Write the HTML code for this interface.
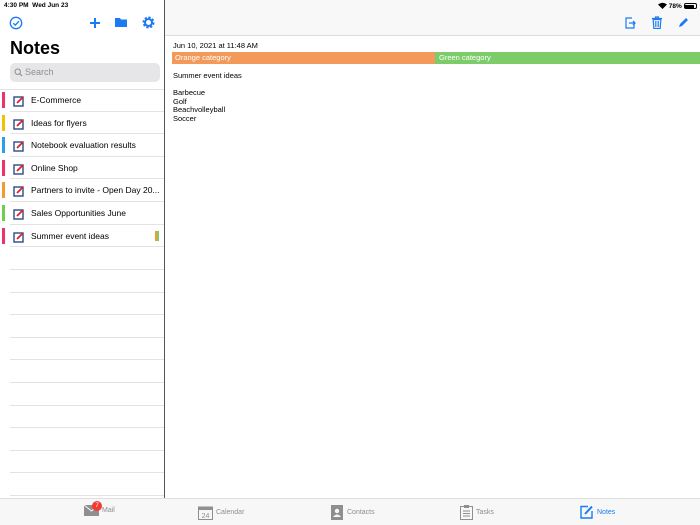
<!DOCTYPE html><html><head><style>
*{margin:0;padding:0;box-sizing:border-box}
body{width:700px;height:525px;position:relative;font-family:"Liberation Sans",sans-serif;background:#fff;overflow:hidden;color:#000}
.abs{position:absolute}
.row{position:absolute;left:0;width:164px;height:22.6px;font-size:8.5px;line-height:22px}
.row .bar{position:absolute;left:2px;top:3px;width:2.5px;height:16px}
.row .t{position:absolute;left:31px;top:0}
.row .ln{position:absolute;left:10px;right:0;bottom:0;border-bottom:1px solid #e3e3e3}
.ic{position:absolute;left:13px;top:6px}
.line{position:absolute;left:10px;width:154px;border-bottom:1px solid #e3e3e3}
.tab{position:absolute;top:505px;font-size:7px;color:#8e8e93;display:flex;align-items:center;gap:3px}
</style></head><body>
<div class="abs" style="left:164px;top:0;width:1px;height:498px;background:#555"></div>
<div class="abs" style="left:165px;top:0;width:535px;height:36px;background:#f8f8f8;border-bottom:1px solid #ddd"></div>
<div class="abs" style="left:4px;top:2px;font-size:6.5px;font-weight:bold">4:30 PM&nbsp; Wed Jun 23</div>
<div class="abs" style="left:658px;top:2px;font-size:6.5px;font-weight:bold">
<svg width="9" height="7" viewBox="0 0 9 7" style="vertical-align:-1px"><path d="M4.5 7L0 2.5Q4.5-1 9 2.5Z" fill="#000"/></svg> 78% <span style="display:inline-block;width:13px;height:6px;border:1px solid #000;border-radius:2px;vertical-align:-1px;padding:0.5px"><span style="display:block;width:9px;height:100%;background:#000"></span></span></div>
<svg class="abs" style="left:9px;top:16px" width="14" height="14" viewBox="0 0 14 14"><circle cx="7" cy="7" r="5.7" fill="none" stroke="#1a7bf2" stroke-width="1.3"/><path d="M4.3 7.2l2 2 3.6-4" fill="none" stroke="#1a7bf2" stroke-width="1.3"/></svg>
<svg class="abs" style="left:89px;top:17px" width="12" height="12" viewBox="0 0 12 12"><path d="M6 1v10M1 6h10" stroke="#1a7bf2" stroke-width="2"/></svg>
<svg class="abs" style="left:115px;top:17px" width="13" height="11" viewBox="0 0 13 11"><path d="M0 1h5l1 1.5h6V10H0z" fill="#1a7bf2"/></svg>
<svg class="abs" style="left:142px;top:16px" width="13" height="13" viewBox="0 0 13 13"><circle cx="6.5" cy="6.5" r="4.5" fill="none" stroke="#1a7bf2" stroke-width="3" stroke-dasharray="2 1.5"/><circle cx="6.5" cy="6.5" r="3.5" fill="none" stroke="#1a7bf2" stroke-width="2"/></svg>
<div class="abs" style="left:10px;top:38px;font-size:18px;font-weight:bold">Notes</div>
<div class="abs" style="left:10px;top:63px;width:150px;height:19px;background:#e6e6e8;border-radius:5px;font-size:9px;color:#8e8e93;line-height:19px;padding-left:15px">Search</div>
<svg class="abs" style="left:14px;top:68px" width="9" height="9" viewBox="0 0 9 9"><circle cx="3.7" cy="3.7" r="2.7" fill="none" stroke="#8e8e93" stroke-width="1"/><path d="M5.7 5.7L8 8" stroke="#8e8e93" stroke-width="1.2"/></svg>
<div class="line" style="top:89px;left:0;width:164px"></div>
<div class="row" style="top:89px"><div class="bar" style="background:#f0306a"></div><svg class="ic" width="12" height="12" viewBox="0 0 12 12"><rect x="1" y="2" width="9" height="9" fill="none" stroke="#2b4a8a" stroke-width="1.4"/><path d="M4 8l6-6" stroke="#e02020" stroke-width="1.8"/></svg><span class="t">E-Commerce</span><div class="ln"></div></div>
<div class="row" style="top:111.6px"><div class="bar" style="background:#f5c000"></div><svg class="ic" width="12" height="12" viewBox="0 0 12 12"><rect x="1" y="2" width="9" height="9" fill="none" stroke="#2b4a8a" stroke-width="1.4"/><path d="M4 8l6-6" stroke="#e02020" stroke-width="1.8"/></svg><span class="t">Ideas for flyers</span><div class="ln"></div></div>
<div class="row" style="top:134.2px"><div class="bar" style="background:#2aa0e8"></div><svg class="ic" width="12" height="12" viewBox="0 0 12 12"><rect x="1" y="2" width="9" height="9" fill="none" stroke="#2b4a8a" stroke-width="1.4"/><path d="M4 8l6-6" stroke="#e02020" stroke-width="1.8"/></svg><span class="t">Notebook evaluation results</span><div class="ln"></div></div>
<div class="row" style="top:156.8px"><div class="bar" style="background:#f0306a"></div><svg class="ic" width="12" height="12" viewBox="0 0 12 12"><rect x="1" y="2" width="9" height="9" fill="none" stroke="#2b4a8a" stroke-width="1.4"/><path d="M4 8l6-6" stroke="#e02020" stroke-width="1.8"/></svg><span class="t">Online Shop</span><div class="ln"></div></div>
<div class="row" style="top:179.4px"><div class="bar" style="background:#f39a30"></div><svg class="ic" width="12" height="12" viewBox="0 0 12 12"><rect x="1" y="2" width="9" height="9" fill="none" stroke="#2b4a8a" stroke-width="1.4"/><path d="M4 8l6-6" stroke="#e02020" stroke-width="1.8"/></svg><span class="t">Partners to invite - Open Day 20...</span><div class="ln"></div></div>
<div class="row" style="top:202px"><div class="bar" style="background:#6cd14a"></div><svg class="ic" width="12" height="12" viewBox="0 0 12 12"><rect x="1" y="2" width="9" height="9" fill="none" stroke="#2b4a8a" stroke-width="1.4"/><path d="M4 8l6-6" stroke="#e02020" stroke-width="1.8"/></svg><span class="t">Sales Opportunities June</span><div class="ln"></div></div>
<div class="row" style="top:224.6px"><div class="bar" style="background:#f0306a"></div><svg class="ic" width="12" height="12" viewBox="0 0 12 12"><rect x="1" y="2" width="9" height="9" fill="none" stroke="#2b4a8a" stroke-width="1.4"/><path d="M4 8l6-6" stroke="#e02020" stroke-width="1.8"/></svg><span class="t">Summer event ideas</span><div class="abs" style="left:155px;top:6px;width:1.5px;height:10px;background:#f39a30"></div><div class="abs" style="left:157px;top:6px;width:1.5px;height:10px;background:#7ccc6a"></div><div class="ln"></div></div>
<div class="line" style="top:269px"></div><div class="line" style="top:291.6px"></div><div class="line" style="top:314.2px"></div><div class="line" style="top:336.8px"></div><div class="line" style="top:359.4px"></div><div class="line" style="top:382px"></div><div class="line" style="top:404.6px"></div><div class="line" style="top:427.2px"></div><div class="line" style="top:449.8px"></div><div class="line" style="top:472.4px"></div><div class="line" style="top:495px"></div>
<svg class="abs" style="left:625px;top:17px" width="11" height="12" viewBox="0 0 11 12"><path d="M7 1H1v10h8V7" fill="none" stroke="#1a7bf2" stroke-width="1.2"/><path d="M4 6h6M8 4l2 2-2 2" fill="none" stroke="#1a7bf2" stroke-width="1.3"/></svg>
<svg class="abs" style="left:652px;top:16px" width="10" height="13" viewBox="0 0 10 13"><path d="M0 2.5h10M3.5 2.5V1h3v1.5M1.2 3.5h7.6L8.2 12.5H1.8z" fill="none" stroke="#1a7bf2" stroke-width="1.2"/><path d="M3.5 5v6M5 5v6M6.5 5v6" stroke="#1a7bf2" stroke-width=".8"/></svg>
<svg class="abs" style="left:678px;top:17px" width="11" height="11" viewBox="0 0 11 11"><path d="M1 10l1-3 6-6 2 2-6 6z" fill="#1a7bf2"/></svg>
<div class="abs" style="left:173px;top:41px;font-size:7.5px">Jun 10, 2021 at 11:48 AM</div>
<div class="abs" style="left:172px;top:52px;width:263px;height:12px;background:#f39a5a;color:#fff;font-size:7.5px;line-height:12px;padding-left:3px">Orange category</div>
<div class="abs" style="left:435px;top:52px;width:265px;height:12px;background:#7ccc6a;color:#fff;font-size:7.5px;line-height:12px;padding-left:4px">Green category</div>
<div class="abs" style="left:173px;top:72px;font-size:7.5px;line-height:8.5px">Summer event ideas<br><br>Barbecue<br>Golf<br>Beachvolleyball<br>Soccer</div>
<div class="abs" style="left:0;top:498px;width:700px;height:27px;background:#f7f7f7;border-top:1px solid #e0e0e0"></div>
<div class="tab" style="left:84px"><svg width="15" height="11" viewBox="0 0 15 11"><rect width="15" height="11" fill="#8e8e93"/><path d="M0 0l7.5 6L15 0" fill="none" stroke="#f7f7f7" stroke-width="1"/></svg>Mail</div>
<div class="abs" style="left:92px;top:501px;width:10px;height:10px;border-radius:50%;background:#f23a30;color:#fff;font-size:6.5px;text-align:center;line-height:10px">7</div>
<div class="tab" style="left:198px"><svg width="15" height="15" viewBox="0 0 15 15"><rect x=".5" y="2" width="14" height="12.5" fill="none" stroke="#8e8e93"/><rect x=".5" y="2" width="14" height="3" fill="#8e8e93"/><text x="7.5" y="13" font-size="7" text-anchor="middle" fill="#8e8e93" font-family="Liberation Sans">24</text></svg>Calendar</div>
<div class="tab" style="left:330px"><svg width="14" height="15" viewBox="0 0 14 15"><rect x="1" width="12" height="15" fill="#8e8e93"/><circle cx="7" cy="6" r="2.2" fill="#f7f7f7"/><path d="M3 12q4-5 8 0z" fill="#f7f7f7"/></svg>Contacts</div>
<div class="tab" style="left:460px"><svg width="13" height="15" viewBox="0 0 13 15"><rect x=".5" y="1.5" width="12" height="13" fill="none" stroke="#8e8e93"/><rect x="4" y="0" width="5" height="3" fill="#8e8e93"/><path d="M3 6h7M3 8.5h7M3 11h7" stroke="#8e8e93"/></svg>Tasks</div>
<div class="tab" style="left:580px;color:#1a7bf2"><svg width="14" height="14" viewBox="0 0 14 14"><path d="M8 1.5H1v11.5h11V6" fill="none" stroke="#1a7bf2" stroke-width="1.4"/><path d="M5 9l7-7.5" stroke="#1a7bf2" stroke-width="2"/></svg>Notes</div>
</body></html>
